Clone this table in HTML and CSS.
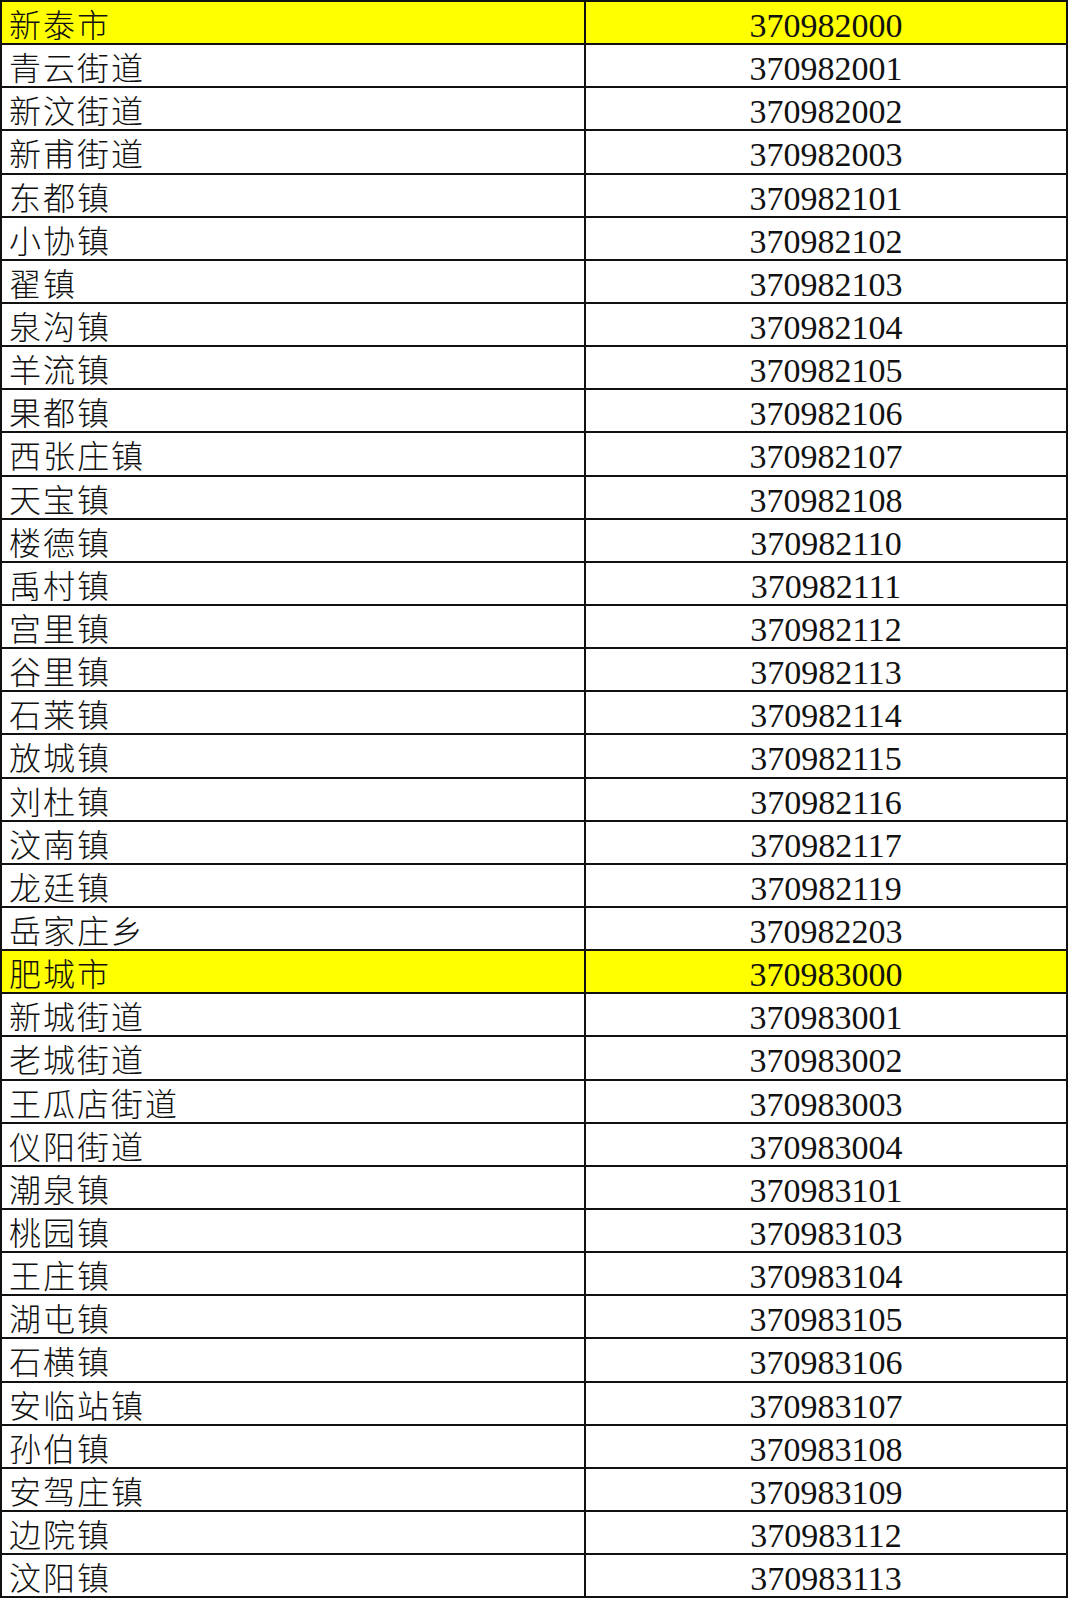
FILE: index.html
```html
<!DOCTYPE html>
<html lang="zh-CN">
<head>
<meta charset="utf-8">
<title>行政区划代码</title>
<link rel="stylesheet" href="styles.css">
</head>
<body>
<div class="sheet">
  <div class="row hl"><div class="name">新泰市</div><div class="code">370982000</div></div>
  <div class="row"><div class="name">青云街道</div><div class="code">370982001</div></div>
  <div class="row"><div class="name">新汶街道</div><div class="code">370982002</div></div>
  <div class="row"><div class="name">新甫街道</div><div class="code">370982003</div></div>
  <div class="row"><div class="name">东都镇</div><div class="code">370982101</div></div>
  <div class="row"><div class="name">小协镇</div><div class="code">370982102</div></div>
  <div class="row"><div class="name">翟镇</div><div class="code">370982103</div></div>
  <div class="row"><div class="name">泉沟镇</div><div class="code">370982104</div></div>
  <div class="row"><div class="name">羊流镇</div><div class="code">370982105</div></div>
  <div class="row"><div class="name">果都镇</div><div class="code">370982106</div></div>
  <div class="row"><div class="name">西张庄镇</div><div class="code">370982107</div></div>
  <div class="row"><div class="name">天宝镇</div><div class="code">370982108</div></div>
  <div class="row"><div class="name">楼德镇</div><div class="code">370982110</div></div>
  <div class="row"><div class="name">禹村镇</div><div class="code">370982111</div></div>
  <div class="row"><div class="name">宫里镇</div><div class="code">370982112</div></div>
  <div class="row"><div class="name">谷里镇</div><div class="code">370982113</div></div>
  <div class="row"><div class="name">石莱镇</div><div class="code">370982114</div></div>
  <div class="row"><div class="name">放城镇</div><div class="code">370982115</div></div>
  <div class="row"><div class="name">刘杜镇</div><div class="code">370982116</div></div>
  <div class="row"><div class="name">汶南镇</div><div class="code">370982117</div></div>
  <div class="row"><div class="name">龙廷镇</div><div class="code">370982119</div></div>
  <div class="row"><div class="name">岳家庄乡</div><div class="code">370982203</div></div>
  <div class="row hl"><div class="name">肥城市</div><div class="code">370983000</div></div>
  <div class="row"><div class="name">新城街道</div><div class="code">370983001</div></div>
  <div class="row"><div class="name">老城街道</div><div class="code">370983002</div></div>
  <div class="row"><div class="name">王瓜店街道</div><div class="code">370983003</div></div>
  <div class="row"><div class="name">仪阳街道</div><div class="code">370983004</div></div>
  <div class="row"><div class="name">潮泉镇</div><div class="code">370983101</div></div>
  <div class="row"><div class="name">桃园镇</div><div class="code">370983103</div></div>
  <div class="row"><div class="name">王庄镇</div><div class="code">370983104</div></div>
  <div class="row"><div class="name">湖屯镇</div><div class="code">370983105</div></div>
  <div class="row"><div class="name">石横镇</div><div class="code">370983106</div></div>
  <div class="row"><div class="name">安临站镇</div><div class="code">370983107</div></div>
  <div class="row"><div class="name">孙伯镇</div><div class="code">370983108</div></div>
  <div class="row"><div class="name">安驾庄镇</div><div class="code">370983109</div></div>
  <div class="row"><div class="name">边院镇</div><div class="code">370983112</div></div>
  <div class="row"><div class="name">汶阳镇</div><div class="code">370983113</div></div>
</div>
</body>
</html>
```
FILE: styles.css
```css
html, body {
  margin: 0;
  padding: 0;
  background: #ffffff;
}
.sheet {
  width: 1068px;
  border-top: 2px solid #111;
  border-left: 2px solid #111;
  box-sizing: border-box;
}
.row {
  display: grid;
  grid-template-columns: 584px 1fr;
  height: 43.15px;
  box-sizing: border-box;
  border-bottom: 2px solid #111;
}
.row.hl {
  background: #ffff00;
}
.name, .code {
  display: flex;
  align-items: flex-start;
  box-sizing: border-box;
  color: #111;
  line-height: 1;
  white-space: nowrap;
}
.name {
  border-right: 2px solid #111;
  padding-left: 7px;
  padding-top: 5px;
  font-family: "Noto Sans CJK SC", sans-serif;
  font-weight: 300;
  font-size: 32px;
  letter-spacing: 2px;
}
.code {
  justify-content: center;
  border-right: 2px solid #111;
  padding-top: 7px;
  font-family: "Liberation Serif", serif;
  font-size: 34px;
  letter-spacing: 0;
}
```
